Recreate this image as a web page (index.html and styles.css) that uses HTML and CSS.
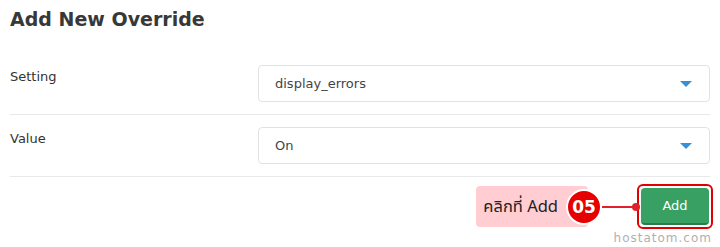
FILE: index.html
```html
<!DOCTYPE html>
<html lang="th">
<head>
  <meta charset="UTF-8">
  <title>Add New Override</title>
  <link rel="stylesheet" href="styles.css">
</head>
<body>
  <div class="panel">
    <h2 class="title">Add New Override</h2>

    <div class="row">
      <div class="label">Setting</div>
      <div class="select">
        <span>display_errors</span>
        <span class="caret"></span>
      </div>
    </div>

    <div class="row">
      <div class="label">Value</div>
      <div class="select">
        <span>On</span>
        <span class="caret"></span>
      </div>
    </div>

    <div class="footer">
      <div class="hint">
        <span class="hint-text">คลิกที่ Add</span>
        <span class="step">05</span>
        <span class="line"></span>
      </div>
      <div class="btn-wrap">
        <button class="btn">Add</button>
      </div>
    </div>
  </div>
  <div class="mark">hostatom.com</div>
</body>
</html>
```

FILE: styles.css
```css
body {
  margin: 0;
  background: #fff;
  color: #333;
  font-family: "DejaVu Sans", Arial, sans-serif;
  font-size: 13px;
  width: 720px;
  height: 247px;
  overflow: hidden;
  position: relative;
}

.panel {
  padding: 0 10px;
}

.title {
  margin: 0;
  padding-top: 7px;
  height: 53px;
  box-sizing: border-box;
  font-size: 19px;
  font-weight: 600;
  color: #383838;
  line-height: 24px;
}

.row {
  display: flex;
  align-items: flex-start;
  padding: 12px 0;
  border-bottom: 1px solid #e8e8e8;
}

.label {
  width: 248px;
  padding-top: 2px;
  line-height: 20px;
  color: #333;
}

.select {
  flex: 1;
  height: 37px;
  box-sizing: border-box;
  border: 1px solid #e2e2e2;
  border-radius: 4px;
  display: flex;
  align-items: center;
  justify-content: space-between;
  padding: 0 17px 0 16px;
  color: #444;
}

.caret {
  width: 0;
  height: 0;
  border-left: 6px solid transparent;
  border-right: 6px solid transparent;
  border-top: 6px solid #3a8fd2;
}

.footer {
  display: flex;
  justify-content: flex-end;
  align-items: center;
  padding-top: 7px;
}

.hint {
  display: flex;
  align-items: center;
}

.hint-text {
  background: #ffcdd2;
  border-radius: 4px;
  height: 41px;
  line-height: 41px;
  padding: 0 30px 0 7px;
  margin-right: -22px;
  font-family: "Noto Sans Thai", "Noto Sans", "DejaVu Sans", sans-serif;
  font-size: 16.5px;
  color: #222;
}

.step {
  position: relative;
  width: 32px;
  height: 32px;
  border-radius: 50%;
  background: #e60000;
  border: 2px solid #fff;
  color: #fff;
  font-weight: bold;
  font-size: 17px;
  text-align: center;
  line-height: 32px;
}

.line {
  width: 35px;
  height: 2px;
  background: #e0202a;
  position: relative;
}

.line::after {
  content: "";
  position: absolute;
  right: -3px;
  top: -3px;
  width: 8px;
  height: 8px;
  border-radius: 50%;
  background: #e0202a;
}

.btn-wrap {
  border: 2px solid #e00000;
  border-radius: 6px;
  padding: 2px;
  margin-right: -3px;
}

.btn {
  display: block;
  width: 68px;
  height: 37px;
  background: #38a062;
  color: #fff;
  border: none;
  border-bottom: 2px solid #2a7d4a;
  border-radius: 4px;
  font-family: "DejaVu Sans", Arial, sans-serif;
  font-size: 13px;
}

.mark {
  position: absolute;
  right: 8px;
  bottom: 2px;
  color: #b0b0b0;
  font-size: 12px;
  letter-spacing: 1px;
}
```
